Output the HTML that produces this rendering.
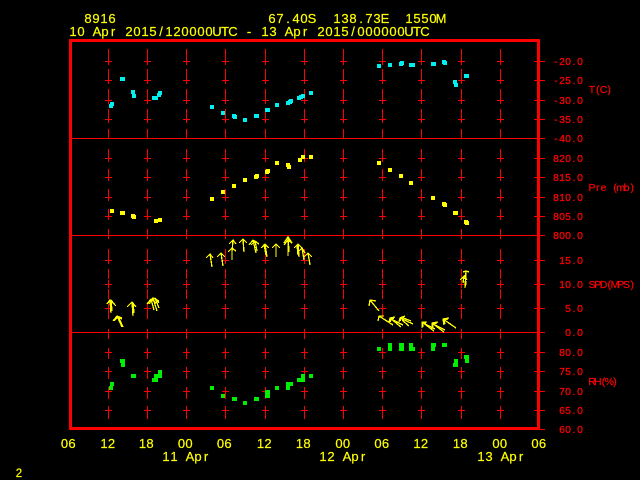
<!DOCTYPE html>
<html><head><meta charset="utf-8"><style>
html,body{margin:0;padding:0;background:#000;width:640px;height:480px;overflow:hidden}
svg{display:block}
text{font-family:"Liberation Sans",sans-serif;text-anchor:middle}
.y{fill:#ff0;stroke:#ff0;stroke-width:.2px}
.t1{font-size:13px}
.r{fill:#f00;stroke:#f00;stroke-width:.25px;font-size:10.5px}
.s{fill:#f00;stroke:#f00;stroke-width:.2px;font-size:10.5px}
.g path{fill:none;stroke:#f00;stroke-width:1}
.a path{fill:none;stroke:#ff0;stroke-width:1.3}
</style></head><body>
<svg width="640" height="480" viewBox="0 0 640 480" xmlns="http://www.w3.org/2000/svg" shape-rendering="crispEdges">
<rect width="640" height="480" fill="#000"/>
<defs>
<path id="col" fill="none" stroke="#f00" stroke-width="1" d="M.5 49V59M.5 69V79M.5 89V99M.5 109V119M.5 129V139M.5 149V159M.5 169V179M.5 189V199M.5 209V219M.5 229V239M.5 249V259M.5 269V279M.5 289V299M.5 309V319M.5 329V339M.5 349V359M.5 369V379M.5 389V399M.5 409V419M.5 57V65M.5 76V84M.5 96V104M.5 115V123M.5 154V162M.5 173V181M.5 193V201M.5 212V220M.5 256V264M.5 280V288M.5 304V312M.5 348V356M.5 367V375M.5 387V395M.5 406V414M-3 61.5H4M-3 80.5H4M-3 100.5H4M-3 119.5H4M-3 158.5H4M-3 177.5H4M-3 197.5H4M-3 216.5H4M-3 260.5H4M-3 284.5H4M-3 308.5H4M-3 352.5H4M-3 371.5H4M-3 391.5H4M-3 410.5H4"/>
</defs>
<g class="g">
<use href="#col" x="108"/><use href="#col" x="147"/><use href="#col" x="186"/><use href="#col" x="225"/><use href="#col" x="265"/><use href="#col" x="304"/><use href="#col" x="343"/><use href="#col" x="382"/><use href="#col" x="421"/><use href="#col" x="461"/><use href="#col" x="500"/>
<path d="M72 138.5H545M72 235.5H545M72 332.5H545M534 61.5H545M534 80.5H545M534 100.5H545M534 119.5H545M534 158.5H545M534 177.5H545M534 197.5H545M534 216.5H545M534 260.5H545M534 284.5H545M534 308.5H545M534 352.5H545M534 371.5H545M534 391.5H545M534 410.5H545M538 429.5H545"/>
</g>
<rect x="70.5" y="40.5" width="468" height="388" fill="none" stroke="#f00" stroke-width="3"/>

<!-- cyan -->
<g fill="#00f0f0">
<rect x="110" y="102" width="4" height="4"/><rect x="109" y="104" width="4" height="4"/><rect x="120" y="77" width="5" height="4"/>
<rect x="131" y="90" width="4" height="4"/><rect x="132" y="94" width="4" height="4"/><rect x="152" y="96" width="6" height="4"/>
<rect x="157" y="93" width="4" height="4"/><rect x="158" y="91" width="4" height="4"/><rect x="210" y="105" width="4" height="4"/>
<rect x="221" y="111" width="4" height="4"/><rect x="232" y="114" width="4" height="4"/><rect x="233" y="115" width="4" height="4"/>
<rect x="243" y="118" width="4" height="4"/><rect x="254" y="114" width="5" height="4"/><rect x="265" y="108" width="5" height="4"/>
<rect x="275" y="103" width="4" height="4"/><rect x="286" y="101" width="4" height="4"/><rect x="288" y="100" width="4" height="4"/><rect x="289" y="99" width="4" height="4"/>
<rect x="297" y="96" width="4" height="4"/><rect x="299" y="95" width="4" height="4"/><rect x="301" y="94" width="4" height="4"/><rect x="309" y="91" width="4" height="4"/>
<rect x="377" y="64" width="4" height="4"/><rect x="388" y="63" width="4" height="4"/><rect x="399" y="62" width="4" height="4"/><rect x="400" y="61" width="4" height="4"/>
<rect x="409" y="63" width="6" height="4"/><rect x="431" y="62" width="5" height="4"/><rect x="442" y="60" width="4" height="4"/><rect x="443" y="61" width="4" height="4"/>
<rect x="453" y="80" width="4" height="4"/><rect x="454" y="83" width="4" height="4"/><rect x="464" y="74" width="5" height="4"/>
</g>
<!-- yellow points -->
<g fill="#ff0">
<rect x="110" y="209" width="4" height="4"/><rect x="120" y="211" width="5" height="4"/><rect x="131" y="214" width="4" height="4"/><rect x="132" y="215" width="4" height="4"/>
<rect x="154" y="219" width="4" height="4"/><rect x="158" y="218" width="4" height="4"/><rect x="210" y="197" width="4" height="4"/><rect x="221" y="190" width="4" height="4"/>
<rect x="232" y="184" width="4" height="4"/><rect x="243" y="178" width="4" height="4"/><rect x="254" y="175" width="4" height="4"/><rect x="255" y="174" width="4" height="4"/>
<rect x="265" y="170" width="4" height="4"/><rect x="266" y="169" width="4" height="4"/><rect x="275" y="161" width="4" height="4"/><rect x="286" y="163" width="4" height="4"/>
<rect x="287" y="165" width="4" height="4"/><rect x="298" y="158" width="4" height="4"/><rect x="301" y="155" width="4" height="4"/><rect x="309" y="155" width="4" height="4"/>
<rect x="377" y="161" width="4" height="4"/><rect x="388" y="168" width="4" height="4"/><rect x="399" y="174" width="4" height="4"/><rect x="409" y="181" width="4" height="4"/>
<rect x="431" y="196" width="4" height="4"/><rect x="442" y="202" width="4" height="4"/><rect x="443" y="203" width="4" height="4"/><rect x="453" y="211" width="5" height="4"/>
<rect x="464" y="220" width="4" height="4"/><rect x="465" y="221" width="4" height="4"/>
</g>
<!-- green -->
<g fill="#0e0">
<rect x="110" y="382" width="4" height="4"/><rect x="109" y="386" width="4" height="4"/><rect x="120" y="359" width="5" height="4"/><rect x="121" y="363" width="4" height="4"/>
<rect x="131" y="374" width="5" height="4"/><rect x="158" y="370" width="4" height="8"/><rect x="154" y="374" width="4" height="4"/><rect x="152" y="378" width="6" height="4"/>
<rect x="210" y="386" width="4" height="4"/><rect x="221" y="394" width="4" height="4"/><rect x="232" y="397" width="5" height="4"/><rect x="243" y="401" width="4" height="4"/>
<rect x="254" y="397" width="5" height="4"/><rect x="265" y="390" width="5" height="8"/><rect x="275" y="386" width="4" height="4"/><rect x="286" y="382" width="7" height="4"/><rect x="286" y="386" width="4" height="4"/>
<rect x="297" y="378" width="8" height="4"/><rect x="301" y="374" width="4" height="4"/><rect x="309" y="374" width="4" height="4"/>
<rect x="377" y="347" width="4" height="4"/><rect x="388" y="343" width="4" height="8"/><rect x="399" y="343" width="5" height="8"/><rect x="409" y="343" width="4" height="4"/><rect x="409" y="347" width="6" height="4"/>
<rect x="431" y="343" width="5" height="4"/><rect x="431" y="347" width="4" height="4"/><rect x="442" y="343" width="5" height="4"/>
<rect x="454" y="359" width="4" height="4"/><rect x="453" y="363" width="5" height="4"/><rect x="464" y="355" width="5" height="4"/><rect x="465" y="359" width="4" height="4"/>
</g>
<!-- wind arrows -->
<g class="a">
<path d="M111 313L110 300M112 311L111 300M107 304L110 300L116 306M108 303L111 300L115 305"/>
<path d="M122 327L117 316M123 327L118 316M113 321L117 316L122 318M114 321L118 317L122 319"/>
<path d="M133 316L132 302M134 313L133 303M127 307L132 302L136 307"/>
<path d="M154 310L151 299M157 311L153 298M159 308L155 298M147 304L151 299L156 303M149 304L153 298L159 301M151 302L155 298L159 303"/>
<path d="M212 267L210 254M206 258L210 254L213 258"/>
<path d="M223 266L221 253M217 257L221 253L225 257"/>
<path d="M232 260L232 248M228 252L232 248L236 251"/>
<path d="M232 252L233 240M229 244L233 240L236 244"/>
<path d="M244 252L243 239M239 243L243 239L247 243"/>
<path d="M256 253L253 240M257 251L255 241M249 245L253 240L257 243M251 245L255 241L259 244"/>
<path d="M267 257L265 244M266 255L264 244M261 248L265 244L269 248M262 247L265 245L268 247"/>
<path d="M276 257L276 244M272 248L276 244L280 248"/>
<path d="M288 256L288 240M289 252L288 237M284 243L288 237L292 243M284 245L288 240L292 243M285 241L288 238L291 241"/>
<path d="M299 257L298 244M298 255L297 245M294 248L298 244L302 248"/>
<path d="M304 260L302 248M298 252L302 248L305 253"/>
<path d="M310 265L308 253M304 257L308 253L312 257"/>
<path d="M379 311L370 300M369 306L370 300L376 301"/>
<path d="M393 325L379 316M378 321L379 316L384 316"/>
<path d="M401 327L390 318M403 325L391 319M389 322L390 318L395 317M390 322L391 319L394 318"/>
<path d="M413 324L400 318M411 321L401 317M409 326L402 320M399 322L400 318L405 316M400 321L401 318L404 317"/>
<path d="M434 331L422 322M435 329L423 323M422 328L422 322L427 322M423 327L423 323L426 323"/>
<path d="M444 332L432 323M445 330L433 324M432 329L432 323L438 322M433 328L433 324L437 323"/>
<path d="M456 328L443 319M444 325L443 319L449 318M445 324L444 320L448 319"/>
<path d="M465 288L466 271M463 283L464 276M466 285L465 275M463 272L466 271L469 272M460 280L464 276L467 280M461 279L464 277"/>
</g>

<!-- header text -->
<g class="y t1">
<text x="88 96 104 112" y="23">8916</text>
<text x="272 280 288 296 304 312" y="23">67.40S</text>
<text x="337 345 353 361 369 377 385" y="23">138.73E</text>
<text x="409 417 425 433 441" y="23">1550M</text>
<text x="73 81 89 97 105 113 121 129 137 145 153 161 169 177 185 193 201 209 217 225 233 241 249 257 265 273 281 289 297 305 313 321 329 337 345 353 361 369 377 385 393 401 409 417 425" y="36">10 Apr 2015/120000UTC - 13 Apr 2015/000000UTC</text>
</g>

<!-- right labels -->
<g class="r">
<text x="556 562 568 574 580" y="65">-20.0</text>
<text x="556 562 568 574 580" y="84">-25.0</text>
<text x="556 562 568 574 580" y="104">-30.0</text>
<text x="556 562 568 574 580" y="123">-35.0</text>
<text x="556 562 568 574 580" y="142">-40.0</text>
<text x="556 562 568 574 580" y="162">820.0</text>
<text x="556 562 568 574 580" y="181">815.0</text>
<text x="556 562 568 574 580" y="201">810.0</text>
<text x="556 562 568 574 580" y="220">805.0</text>
<text x="556 562 568 574 580" y="239">800.0</text>
<text x="562 568 574 580" y="264">15.0</text>
<text x="562 568 574 580" y="288">10.0</text>
<text x="568 574 580" y="312">5.0</text>
<text x="568 574 580" y="336">0.0</text>
<text x="562 568 574 580" y="356">80.0</text>
<text x="562 568 574 580" y="375">75.0</text>
<text x="562 568 574 580" y="395">70.0</text>
<text x="562 568 574 580" y="414">65.0</text>
<text x="562 568 574 580" y="433">60.0</text>
</g>
<g class="s">
<text x="592 597.75 603.5 609.25" y="93">T(C)</text>
<text x="592 597.75 603.5 609.25 615 620.75 626.5 632.25" y="191">Pre (mb)</text>
<text x="592 597.75 603.5 609.25 615 620.75 626.5 632.25" y="288">SPD(MPS)</text>
<text x="592 597.75 603.5 609.25 615" y="385">RH(%)</text>
</g>

<!-- bottom labels -->
<g class="y t1">
<text x="64.5 72" y="448">06</text>
<text x="104 111.5" y="448">12</text>
<text x="142.5 150" y="448">18</text>
<text x="181.5 189" y="448">00</text>
<text x="220.5 228" y="448">06</text>
<text x="260.5 268" y="448">12</text>
<text x="299.5 307" y="448">18</text>
<text x="339 346.5" y="448">00</text>
<text x="378 385.5" y="448">06</text>
<text x="417 424.5" y="448">12</text>
<text x="456.5 464" y="448">18</text>
<text x="496 503.5" y="448">00</text>
<text x="535 542.5" y="448">06</text>
<text x="166 174 182 190 198 206" y="461">11 Apr</text>
<text x="323 331 339 347 355 363" y="461">12 Apr</text>
<text x="481 489 497 505 513 521" y="461">13 Apr</text>
<text x="19" y="477" style="font-size:11.5px">2</text>
</g>
</svg>
</body></html>
